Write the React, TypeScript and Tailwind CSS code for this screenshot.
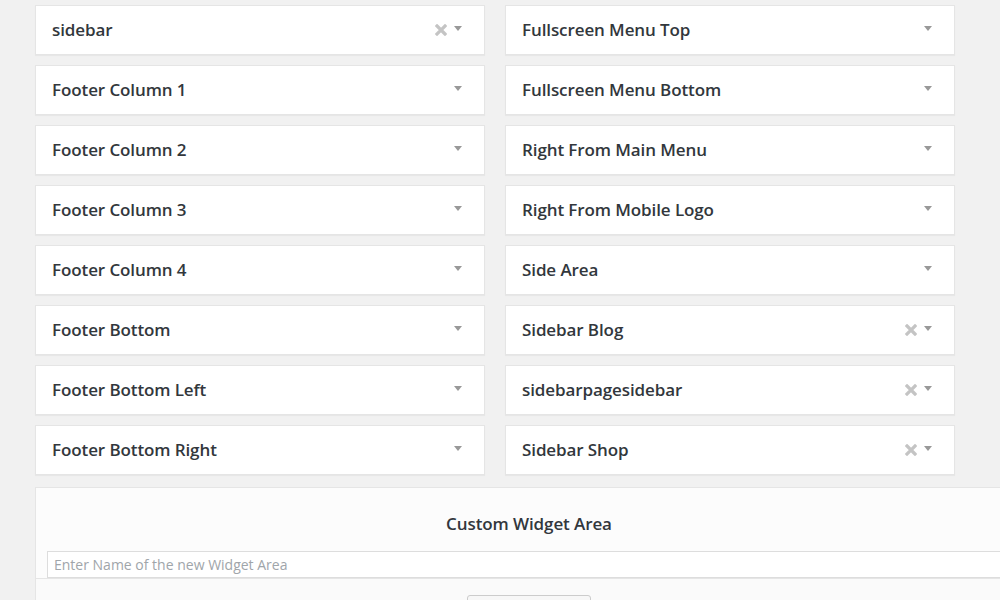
import React from "react"

const left = [
  { name: "sidebar", removable: true },
  { name: "Footer Column 1" },
  { name: "Footer Column 2" },
  { name: "Footer Column 3" },
  { name: "Footer Column 4" },
  { name: "Footer Bottom" },
  { name: "Footer Bottom Left" },
  { name: "Footer Bottom Right" },
]

const right = [
  { name: "Fullscreen Menu Top" },
  { name: "Fullscreen Menu Bottom" },
  { name: "Right From Main Menu" },
  { name: "Right From Mobile Logo" },
  { name: "Side Area" },
  { name: "Sidebar Blog", removable: true },
  { name: "sidebarpagesidebar", removable: true },
  { name: "Sidebar Shop", removable: true },
]

function WidgetArea({ name, removable }: { name: string; removable?: boolean }) {
  return (
    <div className="h-[50px] bg-white border border-[#e5e5e5] shadow-[0_1px_1px_rgba(0,0,0,0.04)] flex items-center pl-4 pr-[22px]">
      <span className="flex-1 text-[17px] font-semibold tracking-[-0.1px] text-[#32373c]">{name}</span>
      {removable && (
        <svg width="12" height="12" viewBox="0 0 12 12" className="mr-[7px] -mt-[1px]">
          <path d="M2 2 L10 10 M10 2 L2 10" stroke="#c4c4c4" strokeWidth="3.2" strokeLinecap="square" />
        </svg>
      )}
      <svg width="8" height="5" viewBox="0 0 8 5" className="-mt-[3px]">
        <path d="M0 0 H8 L4 5 Z" fill="#999" />
      </svg>
    </div>
  )
}

export default function App() {
  return (
    <div
      className="w-[1000px] h-[600px] overflow-hidden bg-[#f1f1f1] pl-[35px] pt-[5px]"
      style={{ fontFamily: '"Open Sans", "Noto Sans", sans-serif' }}
    >
      <div className="flex gap-5">
        <div className="w-[450px] flex flex-col gap-[10px]">
          {left.map((w) => (
            <WidgetArea key={w.name} {...w} />
          ))}
        </div>
        <div className="w-[450px] flex flex-col gap-[10px]">
          {right.map((w) => (
            <WidgetArea key={w.name} {...w} />
          ))}
        </div>
      </div>

      {/* Custom Widget Area */}
      <div className="mt-3 w-[988px] shrink-0 bg-[#fcfcfc] border border-[#e5e5e5]">
        <div className="h-[63px] pt-[8px] flex items-center justify-center text-[17px] font-semibold tracking-[-0.1px] text-[#32373c]">
          Custom Widget Area
        </div>
        <div className="pl-[11px] bg-[#fcfcfc]">
          <input
            type="text"
            placeholder="Enter Name of the new Widget Area"
            className="w-full h-[27px] border border-[#dddddd] bg-white px-[6px] text-[14px] text-[#333] placeholder:text-[#a0a5aa] outline-none"
          />
        </div>
        <div className="h-[60px] border-t border-[#e5e5e5] bg-[#fafafa] flex justify-center pt-4">
          <button className="w-[124px] h-[30px] border border-[#cccccc] rounded-[3px] bg-[#f7f7f7] text-[13px] text-[#555]">
            Add Widget Area
          </button>
        </div>
      </div>
    </div>
  )
}
